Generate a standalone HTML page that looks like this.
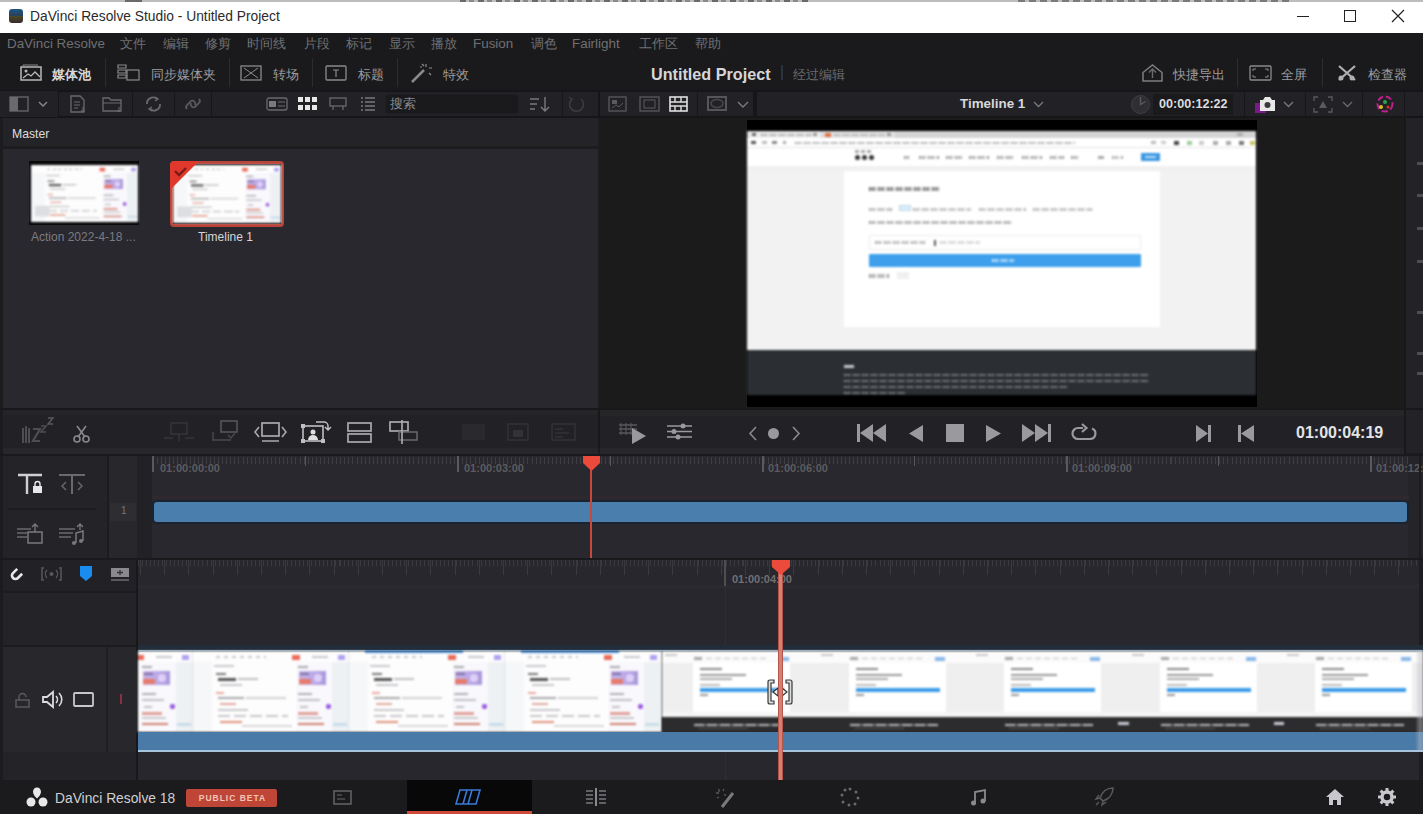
<!DOCTYPE html>
<html><head><meta charset="utf-8">
<style>
*{margin:0;padding:0;box-sizing:border-box}
html,body{width:1423px;height:814px;overflow:hidden;background:#1c1c1f;font-family:"Liberation Sans",sans-serif}
.a{position:absolute}
.t{position:absolute;white-space:nowrap;line-height:1}
svg{position:absolute;overflow:visible}
.m{color:#707072;font-size:13.4px;top:37px}
.tb{color:#9c9c9e;font-size:13px;top:68px}
.thumb{background:#fff;overflow:hidden;filter:blur(1px)}
.thumb i,#clip1 i,#clip2 i{position:absolute;display:block}
.ru{font-size:11px;font-weight:bold;color:#5c5c60}
.sep{position:absolute;width:1px;background:#2c2c2f}
</style></head><body>
<!-- top strip -->
<div class="a" style="left:0;top:0;width:1423px;height:2px;background:#bdbdbd"></div><div class="a" style="left:125px;top:0;width:17px;height:2px;background:#6a6a6a"></div><div class="a" style="left:460px;top:0;width:348px;height:2px;background:repeating-linear-gradient(90deg,#6a6a6a 0 6px,#bdbdbd 6px 9px,#8a8a8a 9px 14px,#bdbdbd 14px 18px)"></div><div class="a" style="left:1018px;top:0;width:272px;height:2px;background:repeating-linear-gradient(90deg,#7a7a7a 0 7px,#bdbdbd 7px 11px)"></div>
<!-- title bar -->
<div class="a" style="left:0;top:2px;width:1423px;height:31px;background:#fff"></div>
<div class="a" style="left:9px;top:9px;width:14px;height:14px;border-radius:3px;background:linear-gradient(#1d5a86 0%,#2c3e58 50%,#4a4a2a 51%,#3b2a2a 100%)"></div>
<div class="t" style="left:30px;top:10px;font-size:13.8px;color:#2b2b2b">DaVinci Resolve Studio - Untitled Project</div>
<svg style="left:1297px;top:16px" width="12" height="2"><rect width="12" height="1" fill="#222"/></svg>
<svg style="left:1344px;top:10px" width="12" height="12"><rect x="0.5" y="0.5" width="11" height="11" fill="none" stroke="#222" stroke-width="1"/></svg>
<svg style="left:1392px;top:10px" width="12" height="12"><path d="M0 0L12 12M12 0L0 12" stroke="#222" stroke-width="1.2"/></svg>

<!-- menu bar -->
<div class="a" style="left:0;top:33px;width:1423px;height:57px;background:#1a1a1c"></div>
<div class="t m" style="left:7px">DaVinci Resolve</div>
<div class="t m" style="left:120px">文件</div>
<div class="t m" style="left:163px">编辑</div>
<div class="t m" style="left:205px">修剪</div>
<div class="t m" style="left:247px">时间线</div>
<div class="t m" style="left:304px">片段</div>
<div class="t m" style="left:346px">标记</div>
<div class="t m" style="left:389px">显示</div>
<div class="t m" style="left:431px">播放</div>
<div class="t m" style="left:473px">Fusion</div>
<div class="t m" style="left:531px">调色</div>
<div class="t m" style="left:572px">Fairlight</div>
<div class="t m" style="left:639px">工作区</div>
<div class="t m" style="left:695px">帮助</div>

<!-- toolbar -->
<svg style="left:20px;top:64px" width="22" height="17"><rect x="1" y="3" width="20" height="13" fill="none" stroke="#b8b8b8" stroke-width="1.5"/><path d="M3 3V1h15" stroke="#888" fill="none"/><circle cx="6" cy="7" r="1.5" fill="#b8b8b8"/><path d="M3 14l5-4 3 2 4-4 5 5" stroke="#b8b8b8" fill="none" stroke-width="1.3"/></svg>
<div class="t tb" style="left:52px;color:#d8d8d8;font-weight:bold">媒体池</div>
<div class="sep" style="left:105px;top:58px;height:29px"></div>
<svg style="left:117px;top:64px" width="23" height="17"><path d="M1 1h8v3H1zM1 6h8v3H1zM1 11h8v3H1z" fill="none" stroke="#8a8a8a" stroke-width="1.2"/><rect x="10" y="6" width="12" height="10" fill="none" stroke="#8a8a8a" stroke-width="1.2"/></svg>
<div class="t tb" style="left:151px">同步媒体夹</div>
<div class="sep" style="left:229px;top:58px;height:29px"></div>
<svg style="left:240px;top:65px" width="22" height="16"><rect x="1" y="1" width="20" height="14" fill="none" stroke="#8a8a8a" stroke-width="1.3"/><path d="M4 3l7 5 7-5M4 13l7-5 7 5" fill="none" stroke="#8a8a8a"/></svg>
<div class="t tb" style="left:273px">转场</div>
<div class="sep" style="left:312px;top:58px;height:29px"></div>
<svg style="left:325px;top:65px" width="22" height="16"><rect x="1" y="1" width="20" height="14" rx="1" fill="none" stroke="#8a8a8a" stroke-width="1.3"/><path d="M8 5h6M11 5v7" stroke="#8a8a8a" stroke-width="1.2"/></svg>
<div class="t tb" style="left:358px">标题</div>
<div class="sep" style="left:397px;top:58px;height:29px"></div>
<svg style="left:410px;top:63px" width="22" height="20"><path d="M2 19L14 7" stroke="#8a8a8a" stroke-width="2.5"/><path d="M16 1v3M19 5h3M14 3l-2-2M19 10l2 2M10 4h2" stroke="#8a8a8a" stroke-width="1.2"/></svg>
<div class="t tb" style="left:443px">特效</div>

<div class="t" style="left:651px;top:66px;font-size:16.2px;font-weight:bold;color:#d6d6d8">Untitled Project</div>
<div class="sep" style="left:781px;top:65px;height:15px;background:#2a3440;width:2px"></div>
<div class="t" style="left:793px;top:68px;font-size:13px;color:#6a6a6c">经过编辑</div>

<svg style="left:1142px;top:64px" width="21" height="18"><path d="M1 17V8.5L10.5 1 20 8.5V17z" fill="none" stroke="#7e7e80" stroke-width="1.5"/><path d="M10.5 5v9M7 8.5l3.5-3.5 3.5 3.5" fill="none" stroke="#6a6a6c" stroke-width="1.4"/></svg>
<div class="t tb" style="left:1173px">快捷导出</div>
<div class="sep" style="left:1237px;top:58px;height:29px"></div>
<svg style="left:1249px;top:65px" width="23" height="16"><rect x="1" y="1" width="21" height="14" rx="1" fill="none" stroke="#8a8a8a" stroke-width="1.3"/><path d="M4 6V4h3M16 4h3v2M4 10v2h3M16 12h3v-2" fill="none" stroke="#8a8a8a"/></svg>
<div class="t tb" style="left:1281px">全屏</div>
<div class="sep" style="left:1322px;top:58px;height:29px"></div>
<svg style="left:1337px;top:64px" width="20" height="18"><path d="M2 2l16 14M18 2L2 16" stroke="#b0b0b0" stroke-width="2.2"/><circle cx="4" cy="14" r="2.5" fill="#b0b0b0"/><circle cx="15" cy="14" r="2.5" fill="#b0b0b0"/></svg>
<div class="t tb" style="left:1368px">检查器</div>

<!-- media pool toolbar -->
<div class="a" style="left:0;top:90px;width:1423px;height:28px;background:#161618"></div>
<div class="a" style="left:0;top:91px;width:58px;height:26px;background:#222226"></div>
<div class="a" style="left:59px;top:92px;width:73px;height:24px;background:#222226"></div>
<div class="a" style="left:133px;top:92px;width:41px;height:24px;background:#222226"></div>
<div class="a" style="left:175px;top:92px;width:36px;height:24px;background:#222226"></div>
<div class="a" style="left:212px;top:92px;width:386px;height:24px;background:#222226"></div>

<!-- viewer toolbar -->
<div class="a" style="left:600px;top:92px;width:97px;height:24px;background:#222226"></div>
<div class="a" style="left:698px;top:92px;width:55px;height:24px;background:#222226"></div>
<div class="a" style="left:757px;top:92px;width:487px;height:24px;background:#222226"></div>
<div class="a" style="left:1245px;top:92px;width:60px;height:24px;background:#222226"></div>
<div class="a" style="left:1306px;top:92px;width:56px;height:24px;background:#222226"></div>
<div class="a" style="left:1363px;top:92px;width:41px;height:24px;background:#222226"></div>
<div class="a" style="left:1405px;top:92px;width:18px;height:24px;background:#222226"></div>

<!-- media pool toolbar icons -->
<svg style="left:9px;top:96px" width="20" height="16"><rect x="1" y="1" width="18" height="14" fill="none" stroke="#6a6a6e" stroke-width="1.3"/><rect x="1" y="1" width="8" height="14" fill="#6a6a6e"/></svg>
<svg style="left:38px;top:101px" width="10" height="6"><path d="M1 1l4 4 4-4" fill="none" stroke="#8a8a8e" stroke-width="1.4"/></svg>
<svg style="left:70px;top:95px" width="17" height="18"><path d="M1 1h9l4 4v12H1z" fill="none" stroke="#6a6a6e" stroke-width="1.3"/><path d="M4 7h6M4 10h6M4 13h4" stroke="#6a6a6e"/><path d="M13 12v5M11 15l2 2 2-2" stroke="#6a6a6e" fill="none"/></svg>
<svg style="left:102px;top:95px" width="20" height="18"><path d="M1 3h6l2 2h10v11H1z" fill="none" stroke="#6a6a6e" stroke-width="1.3"/><path d="M1 8h18" stroke="#6a6a6e"/><path d="M17 12v5M15 15l2 2 2-2" stroke="#6a6a6e" fill="none"/></svg>
<svg style="left:144px;top:96px" width="19" height="16"><path d="M3 8a6 6 0 0 1 10-5M16 8a6 6 0 0 1-10 5" fill="none" stroke="#6a6a6e" stroke-width="1.8"/><path d="M11 1l3 2-3 2M8 11l-3 2 3 2" fill="none" stroke="#6a6a6e" stroke-width="1.5"/></svg>
<svg style="left:184px;top:96px" width="18" height="16"><path d="M3 13a3 3 0 0 1 0-4l4-4a3 3 0 0 1 4 4M15 3a3 3 0 0 1 0 4l-4 4a3 3 0 0 1-4-4" fill="none" stroke="#5a5a5e" stroke-width="1.8"/></svg>
<svg style="left:266px;top:97px" width="22" height="14"><rect x="1" y="1" width="20" height="12" rx="2" fill="none" stroke="#6a6a6e" stroke-width="1.3"/><rect x="3" y="4" width="7" height="6" fill="#7a7a7e"/><path d="M12 5h7M12 9h7" stroke="#6a6a6e"/></svg>
<svg style="left:298px;top:97px" width="19" height="14"><g fill="#e8e8e8"><rect x="0" y="0" width="5" height="5"/><rect x="7" y="0" width="5" height="5"/><rect x="14" y="0" width="5" height="5"/><rect x="0" y="8" width="5" height="5"/><rect x="7" y="8" width="5" height="5"/><rect x="14" y="8" width="5" height="5"/></g></svg>
<svg style="left:329px;top:97px" width="18" height="14"><rect x="1" y="1" width="16" height="8" fill="none" stroke="#6a6a6e" stroke-width="1.3"/><path d="M4 9v4M14 9v4" stroke="#6a6a6e" stroke-width="1.3"/></svg>
<svg style="left:361px;top:97px" width="14" height="14"><path d="M0 1h2M0 5h2M0 9h2M0 13h2M4 1h10M4 5h10M4 9h10M4 13h10" stroke="#7a7a7e" stroke-width="1.4"/></svg>
<div class="a" style="left:385px;top:94px;width:134px;height:20px;background:#1a1a1d;border:1px solid #202024"></div>
<div class="t" style="left:390px;top:97px;font-size:13px;color:#8a8a8e">搜索</div>
<svg style="left:529px;top:96px" width="21" height="16"><path d="M1 3h9M1 8h7M1 13h5" stroke="#7a7a7e" stroke-width="1.4"/><path d="M16 1v14M12 11l4 4 4-4" fill="none" stroke="#7a7a7e" stroke-width="1.4"/></svg>
<div class="a" style="left:562px;top:92px;width:1px;height:24px;background:#18181b"></div>
<svg style="left:567px;top:96px" width="19" height="17"><path d="M5 3a7 7 0 1 0 9 0" fill="none" stroke="#3c3c40" stroke-width="1.6"/><path d="M2 1l3 2-2 3" fill="none" stroke="#3c3c40" stroke-width="1.4"/></svg>

<!-- viewer toolbar icons -->
<svg style="left:608px;top:96px" width="19" height="16"><rect x="1" y="1" width="17" height="14" fill="none" stroke="#5a5a5e" stroke-width="1.3"/><rect x="4" y="4" width="5" height="4" fill="#5a5a5e"/><path d="M4 12l4-3 3 2 4-4" stroke="#5a5a5e" fill="none"/></svg>
<svg style="left:639px;top:96px" width="21" height="16"><rect x="1" y="1" width="19" height="14" fill="none" stroke="#5a5a5e" stroke-width="1.3"/><rect x="5" y="4" width="11" height="8" fill="none" stroke="#5a5a5e"/></svg>
<svg style="left:669px;top:96px" width="19" height="16"><rect x="1" y="1" width="17" height="14" fill="none" stroke="#e0e0e0" stroke-width="1.6"/><path d="M1 6h17M1 10h17M6 1v5M12 1v5M6 10v5M12 10v5" stroke="#e0e0e0" stroke-width="1.4"/></svg>
<svg style="left:707px;top:96px" width="20" height="15"><rect x="1" y="1" width="18" height="13" fill="none" stroke="#55555a" stroke-width="2"/><ellipse cx="10" cy="7.5" rx="6" ry="4" fill="none" stroke="#47474c" stroke-width="1.6"/></svg>
<svg style="left:737px;top:101px" width="12" height="7"><path d="M1 1l5 5 5-5" fill="none" stroke="#7a7a7e" stroke-width="1.4"/></svg>
<div class="t" style="left:960px;top:97px;font-size:13.4px;font-weight:bold;color:#d8d8da">Timeline 1</div>
<svg style="left:1033px;top:101px" width="11" height="7"><path d="M1 1l4.5 4.5L10 1" fill="none" stroke="#7a7a7e" stroke-width="1.3"/></svg>
<svg style="left:1130px;top:94px" width="21" height="21"><circle cx="10.5" cy="10.5" r="9" fill="#2e2e33" stroke="#3e3e44" stroke-width="1"/><path d="M10.5 3v7.5l5-3" stroke="#5a5a5e" fill="none" stroke-width="1.4"/></svg>
<div class="a" style="left:1153px;top:94px;width:80px;height:21px;background:#1a1a1d"></div>
<div class="t" style="left:1159px;top:98px;font-size:12.6px;font-weight:bold;color:#dcdcde">00:00:12:22</div>
<svg style="left:1255px;top:95px" width="22" height="18"><rect x="0" y="8" width="11" height="10" fill="#7a1a8a"/><path d="M5 5h3l2-3h5l2 3h3v11H5z" fill="#e8e8e8"/><circle cx="12.5" cy="10" r="3" fill="#3a3a3e"/></svg>
<svg style="left:1283px;top:101px" width="11" height="7"><path d="M1 1l4.5 4.5L10 1" fill="none" stroke="#7a7a7e" stroke-width="1.3"/></svg>
<svg style="left:1313px;top:96px" width="20" height="17"><path d="M1 5V1h4M15 1h4v4M1 12v4h4M15 16h4v-4" fill="none" stroke="#5a5a5e" stroke-width="1.3"/><path d="M6 12l4-7 4 7z" fill="#5a5a5e"/></svg>
<svg style="left:1342px;top:101px" width="11" height="7"><path d="M1 1l4.5 4.5L10 1" fill="none" stroke="#6a6a6e" stroke-width="1.3"/></svg>
<svg style="left:1375px;top:95px" width="19" height="18"><circle cx="10" cy="9" r="7.5" fill="none" stroke="#c02090" stroke-width="2" stroke-dasharray="6 3"/><circle cx="6" cy="12" r="2" fill="#d8c020"/><circle cx="10" cy="7" r="2" fill="#30a050"/><circle cx="13" cy="12" r="1.5" fill="#e03030"/></svg>

<!-- master header -->
<div class="a" style="left:0;top:118px;width:598px;height:30px;background:#242428"></div>
<!-- media pool content -->
<div class="a" style="left:0;top:148px;width:598px;height:260px;background:#29282e"></div>
<div class="a" style="left:0;top:118px;width:3px;height:290px;background:#1c1c1f"></div>
<div class="t" style="left:12px;top:128px;font-size:12.2px;color:#dcdcde">Master</div>
<div class="a" style="left:0;top:146px;width:598px;height:3px;background:#1d1d20"></div>
<!-- thumb 1 -->
<div class="a" style="left:29px;top:161px;width:110px;height:64px;background:#0a0a0a"></div>
<div class="a thumb" style="left:31px;top:165px;width:107px;height:57px"><!--T1--><div class="a" style="left:0;top:0;width:156px;height:81px;transform-origin:0 0;transform:scale(0.686,0.704)"><i style="left:0.0px;top:0px;width:156px;height:81px;background:#fdfdfd;"></i><i style="left:0.0px;top:11px;width:20px;height:70px;background:#f6f7f9;"></i><i style="left:0.0px;top:0px;width:1px;height:81px;background:#dde2e6;"></i><i style="left:24.0px;top:5px;width:50px;height:2px;background:repeating-linear-gradient(90deg,#c8c8cc 0 4px,transparent 4px 8px);"></i><i style="left:100.0px;top:4px;width:8px;height:5px;background:#ec6a58;"></i><i style="left:120.0px;top:5px;width:16px;height:2px;background:#c8c8cc;"></i><i style="left:146.0px;top:4px;width:7px;height:5px;background:#b0a0f0;"></i><i style="left:22.0px;top:14px;width:20px;height:2px;background:#c8c8cc;"></i><i style="left:24.0px;top:22px;width:10px;height:2px;background:#777;"></i><i style="left:26.0px;top:27px;width:18px;height:3px;background:#555;"></i><i style="left:46.0px;top:27px;width:20px;height:2px;background:#c0c0c4;"></i><i style="left:28.0px;top:33px;width:22px;height:2px;background:#c8c8cc;"></i><i style="left:24.0px;top:41px;width:8px;height:2px;background:#e8a8a0;"></i><i style="left:26.0px;top:46px;width:26px;height:2px;background:#a8a8ac;"></i><i style="left:54.0px;top:46px;width:40px;height:2px;background:#d0d0d4;"></i><i style="left:28.0px;top:52px;width:16px;height:2px;background:#e0a8a0;"></i><i style="left:26.0px;top:58px;width:30px;height:2px;background:#c8c8cc;"></i><i style="left:26.0px;top:64px;width:70px;height:2px;background:repeating-linear-gradient(90deg,#c8c8cc 0 12px,transparent 12px 16px);"></i><i style="left:28.0px;top:70px;width:22px;height:2px;background:#e0907a;"></i><i style="left:50.0px;top:74px;width:50px;height:2px;background:#d8d8dc;"></i><i style="left:104.0px;top:11px;width:36px;height:70px;background:#f9f8fc;"></i><i style="left:106.0px;top:15px;width:10px;height:2px;background:#a8a8ac;"></i><i style="left:107.0px;top:20px;width:27px;height:14px;background:linear-gradient(90deg,#c8b0e0 0,#b8a8e8 60%,#a898d8 100%);"></i><i style="left:107.0px;top:28px;width:12px;height:5px;background:#e87a6a;"></i><i style="left:108.0px;top:22px;width:9px;height:2px;background:#7a70a8;"></i><i style="left:122.0px;top:23px;width:8px;height:8px;background:#e0d0f8;border-radius:4px"></i><i style="left:106.0px;top:42px;width:14px;height:2px;background:#b0b0b4;"></i><i style="left:106.0px;top:48px;width:22px;height:2px;background:#c0c0c4;"></i><i style="left:134.0px;top:53px;width:5px;height:5px;background:#9a5ae0;border-radius:2px"></i><i style="left:108.0px;top:55px;width:8px;height:2px;background:#c0c0c4;"></i><i style="left:106.0px;top:61px;width:20px;height:3px;background:#e0a098;"></i><i style="left:106.0px;top:66px;width:24px;height:2px;background:#c8c8cc;"></i><i style="left:106.0px;top:72px;width:26px;height:2px;background:#d08070;"></i><i style="left:140.0px;top:11px;width:16px;height:70px;background:#eef1f3;"></i><i style="left:141.0px;top:72px;width:14px;height:3px;background:#c8dcea;"></i><i style="left:6.0px;top:58px;width:21px;height:15px;background:#dcdee2;"></i></div><!--/T1--></div>
<div class="t" style="left:31px;top:231px;font-size:12px;color:#7c7c80">Action 2022-4-18 ...</div>
<!-- thumb 2 -->
<div class="a" style="left:170px;top:161px;width:114px;height:66px;background:#b8443a;border-radius:4px"></div><div class="a" style="left:173px;top:164px;width:108px;height:60px;background:#1a1010"></div>
<div class="a thumb" style="left:173px;top:165px;width:108px;height:58px"><!--T2--><div class="a" style="left:0;top:0;width:156px;height:81px;transform-origin:0 0;transform:scale(0.692,0.716)"><i style="left:0.0px;top:0px;width:156px;height:81px;background:#fdfdfd;"></i><i style="left:0.0px;top:11px;width:20px;height:70px;background:#f6f7f9;"></i><i style="left:0.0px;top:0px;width:1px;height:81px;background:#dde2e6;"></i><i style="left:24.0px;top:5px;width:50px;height:2px;background:repeating-linear-gradient(90deg,#c8c8cc 0 4px,transparent 4px 8px);"></i><i style="left:100.0px;top:4px;width:8px;height:5px;background:#ec6a58;"></i><i style="left:120.0px;top:5px;width:16px;height:2px;background:#c8c8cc;"></i><i style="left:146.0px;top:4px;width:7px;height:5px;background:#b0a0f0;"></i><i style="left:22.0px;top:14px;width:20px;height:2px;background:#c8c8cc;"></i><i style="left:24.0px;top:22px;width:10px;height:2px;background:#777;"></i><i style="left:26.0px;top:27px;width:18px;height:3px;background:#555;"></i><i style="left:46.0px;top:27px;width:20px;height:2px;background:#c0c0c4;"></i><i style="left:28.0px;top:33px;width:22px;height:2px;background:#c8c8cc;"></i><i style="left:24.0px;top:41px;width:8px;height:2px;background:#e8a8a0;"></i><i style="left:26.0px;top:46px;width:26px;height:2px;background:#a8a8ac;"></i><i style="left:54.0px;top:46px;width:40px;height:2px;background:#d0d0d4;"></i><i style="left:28.0px;top:52px;width:16px;height:2px;background:#e0a8a0;"></i><i style="left:26.0px;top:58px;width:30px;height:2px;background:#c8c8cc;"></i><i style="left:26.0px;top:64px;width:70px;height:2px;background:repeating-linear-gradient(90deg,#c8c8cc 0 12px,transparent 12px 16px);"></i><i style="left:28.0px;top:70px;width:22px;height:2px;background:#e0907a;"></i><i style="left:50.0px;top:74px;width:50px;height:2px;background:#d8d8dc;"></i><i style="left:104.0px;top:11px;width:36px;height:70px;background:#f9f8fc;"></i><i style="left:106.0px;top:15px;width:10px;height:2px;background:#a8a8ac;"></i><i style="left:107.0px;top:20px;width:27px;height:14px;background:linear-gradient(90deg,#c8b0e0 0,#b8a8e8 60%,#a898d8 100%);"></i><i style="left:107.0px;top:28px;width:12px;height:5px;background:#e87a6a;"></i><i style="left:108.0px;top:22px;width:9px;height:2px;background:#7a70a8;"></i><i style="left:122.0px;top:23px;width:8px;height:8px;background:#e0d0f8;border-radius:4px"></i><i style="left:106.0px;top:42px;width:14px;height:2px;background:#b0b0b4;"></i><i style="left:106.0px;top:48px;width:22px;height:2px;background:#c0c0c4;"></i><i style="left:134.0px;top:53px;width:5px;height:5px;background:#9a5ae0;border-radius:2px"></i><i style="left:108.0px;top:55px;width:8px;height:2px;background:#c0c0c4;"></i><i style="left:106.0px;top:61px;width:20px;height:3px;background:#e0a098;"></i><i style="left:106.0px;top:66px;width:24px;height:2px;background:#c8c8cc;"></i><i style="left:106.0px;top:72px;width:26px;height:2px;background:#d08070;"></i><i style="left:140.0px;top:11px;width:16px;height:70px;background:#eef1f3;"></i><i style="left:141.0px;top:72px;width:14px;height:3px;background:#c8dcea;"></i><i style="left:6.0px;top:58px;width:21px;height:15px;background:#dcdee2;"></i></div><!--/T2--></div>
<svg style="left:170px;top:161px" width="30" height="30"><path d="M3 0H29L0 29V3z" fill="#e0382c"/><path d="M5 10l4 4 7-7" fill="none" stroke="#7a1c16" stroke-width="2.4"/></svg>
<div class="t" style="left:198px;top:231px;font-size:12px;color:#d6d6d8">Timeline 1</div>

<!-- viewer bg -->
<div class="a" style="left:600px;top:118px;width:804px;height:291px;background:#1b1b1c"></div>
<div class="a" style="left:1406px;top:118px;width:17px;height:291px;background:#232327"></div>
<div class="a" style="left:1417px;top:162px;width:6px;height:3px;background:#4e4e52"></div><div class="a" style="left:1417px;top:194px;width:6px;height:3px;background:#4e4e52"></div><div class="a" style="left:1417px;top:227px;width:6px;height:3px;background:#4e4e52"></div><div class="a" style="left:1417px;top:260px;width:6px;height:3px;background:#4e4e52"></div><div class="a" style="left:1417px;top:311px;width:6px;height:3px;background:#4e4e52"></div><div class="a" style="left:1417px;top:352px;width:6px;height:3px;background:#4e4e52"></div><div class="a" style="left:1417px;top:372px;width:6px;height:3px;background:#4e4e52"></div>
<div class="a" style="left:1404px;top:118px;width:2px;height:291px;background:#18181b"></div>
<!-- viewer frame -->
<div class="a" style="left:747px;top:120px;width:510px;height:287px;background:#000"></div>
<!-- viewer screenshot -->
<div class="a" style="left:747px;top:131px;width:509px;height:264px;background:#f2f2f2;overflow:hidden;filter:blur(1px)">
<div class="a" style="left:0px;top:0px;width:509px;height:7px;background:#d4d4d4;"></div>
<div class="a" style="left:2px;top:1px;width:72px;height:6px;background:#eeeeee;"></div>
<div class="a" style="left:5px;top:2px;width:4px;height:3px;background:#666;"></div>
<div class="a" style="left:14px;top:3px;width:50px;height:2px;background:repeating-linear-gradient(90deg,#999 0 2px,transparent 2px 3px,#999 3px 5px,transparent 5px 6px,#999 6px 7px,transparent 7px 9px);"></div>
<div class="a" style="left:66px;top:2px;width:4px;height:3px;background:#999;"></div>
<div class="a" style="left:76px;top:1px;width:72px;height:6px;background:#e2e2e2;"></div>
<div class="a" style="left:78px;top:2px;width:6px;height:4px;background:#e07040;"></div>
<div class="a" style="left:87px;top:3px;width:50px;height:2px;background:repeating-linear-gradient(90deg,#aaa 0 2px,transparent 2px 3px,#aaa 3px 5px,transparent 5px 6px,#aaa 6px 7px,transparent 7px 9px);"></div>
<div class="a" style="left:140px;top:2px;width:4px;height:3px;background:#999;"></div>
<div class="a" style="left:490px;top:2px;width:6px;height:3px;background:#aaa;"></div>
<div class="a" style="left:0px;top:7px;width:509px;height:10px;background:#fff;"></div>
<div class="a" style="left:0px;top:16px;width:509px;height:1px;background:#e4e4e4;"></div>
<div class="a" style="left:4px;top:10px;width:5px;height:3px;background:#555;"></div>
<div class="a" style="left:15px;top:10px;width:5px;height:3px;background:#bbb;"></div>
<div class="a" style="left:25px;top:10px;width:5px;height:3px;background:#888;"></div>
<div class="a" style="left:36px;top:10px;width:3px;height:3px;background:#aaa;"></div>
<div class="a" style="left:48px;top:11px;width:280px;height:2px;background:repeating-linear-gradient(90deg,#9a9a9a 0 2px,transparent 2px 3px,#9a9a9a 3px 5px,transparent 5px 6px,#9a9a9a 6px 7px,transparent 7px 9px);"></div>
<div class="a" style="left:404px;top:10px;width:5px;height:3px;background:#bbb;"></div>
<div class="a" style="left:414px;top:10px;width:5px;height:3px;background:#ccc;"></div>
<div class="a" style="left:427px;top:10px;width:5px;height:4px;background:#444;"></div>
<div class="a" style="left:440px;top:10px;width:5px;height:4px;background:#9ccc9c;"></div>
<div class="a" style="left:452px;top:10px;width:5px;height:4px;background:#ccc;"></div>
<div class="a" style="left:466px;top:10px;width:5px;height:4px;background:#aaa;"></div>
<div class="a" style="left:479px;top:10px;width:5px;height:4px;background:#aaa;"></div>
<div class="a" style="left:492px;top:10px;width:5px;height:4px;background:#777;"></div>
<div class="a" style="left:503px;top:10px;width:5px;height:4px;background:#c8c060;"></div>
<div class="a" style="left:0px;top:17px;width:509px;height:18px;background:#fff;"></div>
<div class="a" style="left:108px;top:19px;width:4px;height:3px;background:#aaa;"></div>
<div class="a" style="left:114px;top:19px;width:4px;height:3px;background:#aaa;"></div>
<div class="a" style="left:120px;top:19px;width:4px;height:3px;background:#aaa;"></div>
<div class="a" style="left:108px;top:24px;width:5px;height:5px;background:#333;border-radius:50%"></div>
<div class="a" style="left:115px;top:24px;width:5px;height:5px;background:#333;border-radius:50%"></div>
<div class="a" style="left:122px;top:24px;width:5px;height:5px;background:#333;border-radius:50%"></div>
<div class="a" style="left:157px;top:25px;width:6px;height:3px;background:repeating-linear-gradient(90deg,#999 0 2px,transparent 2px 3px,#999 3px 5px,transparent 5px 6px,#999 6px 7px,transparent 7px 9px);"></div>
<div class="a" style="left:172px;top:25px;width:20px;height:3px;background:repeating-linear-gradient(90deg,#999 0 2px,transparent 2px 3px,#999 3px 5px,transparent 5px 6px,#999 6px 7px,transparent 7px 9px);"></div>
<div class="a" style="left:199px;top:25px;width:16px;height:3px;background:repeating-linear-gradient(90deg,#999 0 2px,transparent 2px 3px,#999 3px 5px,transparent 5px 6px,#999 6px 7px,transparent 7px 9px);"></div>
<div class="a" style="left:222px;top:25px;width:20px;height:3px;background:repeating-linear-gradient(90deg,#999 0 2px,transparent 2px 3px,#999 3px 5px,transparent 5px 6px,#999 6px 7px,transparent 7px 9px);"></div>
<div class="a" style="left:250px;top:25px;width:18px;height:3px;background:repeating-linear-gradient(90deg,#999 0 2px,transparent 2px 3px,#999 3px 5px,transparent 5px 6px,#999 6px 7px,transparent 7px 9px);"></div>
<div class="a" style="left:275px;top:25px;width:20px;height:3px;background:repeating-linear-gradient(90deg,#999 0 2px,transparent 2px 3px,#999 3px 5px,transparent 5px 6px,#999 6px 7px,transparent 7px 9px);"></div>
<div class="a" style="left:303px;top:25px;width:14px;height:3px;background:repeating-linear-gradient(90deg,#999 0 2px,transparent 2px 3px,#999 3px 5px,transparent 5px 6px,#999 6px 7px,transparent 7px 9px);"></div>
<div class="a" style="left:324px;top:25px;width:8px;height:3px;background:repeating-linear-gradient(90deg,#999 0 2px,transparent 2px 3px,#999 3px 5px,transparent 5px 6px,#999 6px 7px,transparent 7px 9px);"></div>
<div class="a" style="left:351px;top:25px;width:6px;height:3px;background:#aaa;"></div>
<div class="a" style="left:365px;top:25px;width:12px;height:3px;background:repeating-linear-gradient(90deg,#aaa 0 2px,transparent 2px 3px,#aaa 3px 5px,transparent 5px 6px,#aaa 6px 7px,transparent 7px 9px);"></div>
<div class="a" style="left:394px;top:22px;width:19px;height:8px;background:#3a96e0;"></div>
<div class="a" style="left:398px;top:25px;width:11px;height:2px;background:#bfe0fb;"></div>
<div class="a" style="left:0px;top:35px;width:509px;height:5px;background:#f0f0f0;"></div>
<div class="a" style="left:97px;top:40px;width:316px;height:156px;background:#fff;"></div>
<div class="a" style="left:122px;top:56px;width:70px;height:4px;background:repeating-linear-gradient(90deg,#6a6a6a 0 2px,transparent 2px 3px,#6a6a6a 3px 5px,transparent 5px 6px,#6a6a6a 6px 7px,transparent 7px 9px);"></div>
<div class="a" style="left:122px;top:77px;width:24px;height:3px;background:repeating-linear-gradient(90deg,#a8a8a8 0 2px,transparent 2px 3px,#a8a8a8 3px 5px,transparent 5px 6px,#a8a8a8 6px 7px,transparent 7px 9px);"></div>
<div class="a" style="left:152px;top:74px;width:12px;height:6px;background:#dbeef9;border:1px solid #bcd8ea"></div>
<div class="a" style="left:166px;top:77px;width:58px;height:3px;background:repeating-linear-gradient(90deg,#b0b0b0 0 2px,transparent 2px 3px,#b0b0b0 3px 5px,transparent 5px 6px,#b0b0b0 6px 7px,transparent 7px 9px);"></div>
<div class="a" style="left:232px;top:77px;width:48px;height:3px;background:repeating-linear-gradient(90deg,#b0b0b0 0 2px,transparent 2px 3px,#b0b0b0 3px 5px,transparent 5px 6px,#b0b0b0 6px 7px,transparent 7px 9px);"></div>
<div class="a" style="left:286px;top:77px;width:60px;height:3px;background:repeating-linear-gradient(90deg,#b0b0b0 0 2px,transparent 2px 3px,#b0b0b0 3px 5px,transparent 5px 6px,#b0b0b0 6px 7px,transparent 7px 9px);"></div>
<div class="a" style="left:122px;top:90px;width:144px;height:3px;background:repeating-linear-gradient(90deg,#9a9a9a 0 2px,transparent 2px 3px,#9a9a9a 3px 5px,transparent 5px 6px,#9a9a9a 6px 7px,transparent 7px 9px);"></div>
<div class="a" style="left:122px;top:104px;width:272px;height:15px;background:#fff;border:1px solid #ececec"></div>
<div class="a" style="left:128px;top:110px;width:50px;height:3px;background:repeating-linear-gradient(90deg,#aaa 0 2px,transparent 2px 3px,#aaa 3px 5px,transparent 5px 6px,#aaa 6px 7px,transparent 7px 9px);"></div>
<div class="a" style="left:187px;top:109px;width:2px;height:6px;background:#555;"></div>
<div class="a" style="left:193px;top:110px;width:40px;height:3px;background:repeating-linear-gradient(90deg,#ccc 0 2px,transparent 2px 3px,#ccc 3px 5px,transparent 5px 6px,#ccc 6px 7px,transparent 7px 9px);"></div>
<div class="a" style="left:122px;top:123px;width:272px;height:13px;background:#3ea0ec;border-radius:1px"></div>
<div class="a" style="left:245px;top:128px;width:22px;height:3px;background:repeating-linear-gradient(90deg,#d5ebfc 0 2px,transparent 2px 3px,#d5ebfc 3px 5px,transparent 5px 6px,#d5ebfc 6px 7px,transparent 7px 9px);"></div>
<div class="a" style="left:122px;top:143px;width:20px;height:4px;background:repeating-linear-gradient(90deg,#999 0 2px,transparent 2px 3px,#999 3px 5px,transparent 5px 6px,#999 6px 7px,transparent 7px 9px);"></div>
<div class="a" style="left:150px;top:141px;width:12px;height:7px;background:#f0f0f0;"></div>
<div class="a" style="left:0px;top:219px;width:509px;height:45px;background:#2b2f33;"></div>
<div class="a" style="left:97px;top:234px;width:10px;height:3px;background:#c8c8c8;"></div>
<div class="a" style="left:97px;top:243px;width:306px;height:2px;background:repeating-linear-gradient(90deg,#8e9092 0 2px,transparent 2px 3px,#8e9092 3px 5px,transparent 5px 6px,#8e9092 6px 7px,transparent 7px 9px);"></div>
<div class="a" style="left:97px;top:249px;width:306px;height:2px;background:repeating-linear-gradient(90deg,#8e9092 0 2px,transparent 2px 3px,#8e9092 3px 5px,transparent 5px 6px,#8e9092 6px 7px,transparent 7px 9px);"></div>
<div class="a" style="left:97px;top:255px;width:224px;height:2px;background:repeating-linear-gradient(90deg,#8e9092 0 2px,transparent 2px 3px,#8e9092 3px 5px,transparent 5px 6px,#8e9092 6px 7px,transparent 7px 9px);"></div>
<div class="a" style="left:97px;top:261px;width:62px;height:2px;background:repeating-linear-gradient(90deg,#8e9092 0 2px,transparent 2px 3px,#8e9092 3px 5px,transparent 5px 6px,#8e9092 6px 7px,transparent 7px 9px);"></div>
</div>

<!-- tool row -->
<div class="a" style="left:0;top:408px;width:1423px;height:2px;background:#18181b"></div>
<div class="a" style="left:0;top:410px;width:598px;height:43px;background:#222226"></div>
<div class="a" style="left:598px;top:408px;width:2px;height:45px;background:#18181b"></div>
<div class="a" style="left:600px;top:410px;width:804px;height:43px;background:#222226"></div>
<div class="a" style="left:1404px;top:408px;width:2px;height:45px;background:#18181b"></div>
<div class="a" style="left:1406px;top:410px;width:17px;height:43px;background:#232327"></div>
<div class="a" style="left:3px;top:410px;width:595px;height:5px;background:#252529"></div>
<div class="a" style="left:600px;top:410px;width:804px;height:6px;background:#262629"></div>
<div class="a" style="left:3px;top:448px;width:1401px;height:6px;background:#27272b"></div>
<div class="a" style="left:598px;top:448px;width:2px;height:6px;background:#1c1c1f"></div>
<div class="a" style="left:0;top:410px;width:3px;height:43px;background:#1c1c1f"></div>
<!-- left tool icons -->
<svg style="left:21px;top:417px" width="34" height="28"><path d="M2 11v15M5 9v17M8 11v15" stroke="#4e4e52" stroke-width="2"/><path d="M12 12h7l-7 12h7" fill="none" stroke="#4e4e52" stroke-width="2.2"/><path d="M20 9h5l-5 6h5" fill="none" stroke="#4e4e52" stroke-width="1.6"/><path d="M27 1h5l-5 6h5" fill="none" stroke="#5a5a5e" stroke-width="1.4"/></svg>
<svg style="left:72px;top:425px" width="19" height="18"><path d="M5 1l8 11M14 1L6 12" stroke="#8a8a8e" stroke-width="1.6"/><circle cx="5" cy="14" r="3" fill="none" stroke="#8a8a8e" stroke-width="1.6"/><circle cx="14" cy="14" r="3" fill="none" stroke="#8a8a8e" stroke-width="1.6"/></svg>
<svg style="left:163px;top:422px" width="33" height="20"><rect x="8" y="1" width="16" height="11" fill="none" stroke="#36363a" stroke-width="1.5"/><path d="M1 16h9M22 16h9M16 12v7" stroke="#36363a" stroke-width="1.5"/></svg>
<svg style="left:212px;top:420px" width="27" height="22"><rect x="9" y="1" width="16" height="11" fill="none" stroke="#5a5a5e" stroke-width="1.5"/><path d="M1 12v8h18M16 15l3 3 4-5" fill="none" stroke="#4a4a4e" stroke-width="1.4"/></svg>
<svg style="left:254px;top:421px" width="33" height="22"><rect x="8" y="2" width="17" height="13" fill="none" stroke="#aaaaae" stroke-width="1.7"/><path d="M5 6l-4 5 4 5M28 6l4 5-4 5M8 20h17" fill="none" stroke="#aaaaae" stroke-width="1.6"/></svg>
<svg style="left:300px;top:417px" width="30" height="28"><rect x="3" y="9" width="20" height="15" fill="none" stroke="#c0c0c4" stroke-width="1.6"/><path d="M16 5h8a4 4 0 0 1 4 4v3M25 10l3 3 3-3" fill="none" stroke="#c0c0c4" stroke-width="1.5"/><circle cx="13" cy="15" r="2.5" fill="#e0e0e0"/><path d="M8 23a5 5 0 0 1 10 0z" fill="#e0e0e0"/><rect x="1" y="7" width="4" height="4" fill="#c0c0c4"/><rect x="21" y="22" width="4" height="4" fill="#c0c0c4"/><rect x="1" y="22" width="4" height="4" fill="#c0c0c4"/></svg>
<svg style="left:347px;top:421px" width="25" height="22"><rect x="1" y="2" width="23" height="8" fill="none" stroke="#aaaaae" stroke-width="1.7"/><rect x="1" y="13" width="23" height="8" fill="none" stroke="#aaaaae" stroke-width="1.7"/></svg>
<svg style="left:389px;top:420px" width="29" height="24"><rect x="1" y="2" width="18" height="9" fill="none" stroke="#aaaaae" stroke-width="1.7"/><rect x="10" y="12" width="18" height="8" fill="none" stroke="#6a6a6e" stroke-width="1.5"/><path d="M13 0v24" stroke="#aaaaae" stroke-width="1.7"/></svg>
<svg style="left:461px;top:423px" width="25" height="18"><rect x="1" y="1" width="23" height="16" fill="#2a2a2e"/></svg>
<svg style="left:507px;top:423px" width="22" height="18"><rect x="1" y="1" width="20" height="16" fill="none" stroke="#333337" stroke-width="1.5"/><rect x="6" y="7" width="10" height="7" fill="#333337"/></svg>
<svg style="left:551px;top:423px" width="25" height="18"><rect x="1" y="1" width="23" height="16" fill="none" stroke="#333337" stroke-width="1.5"/><path d="M4 6h8M4 10h14M4 14h8" stroke="#333337" stroke-width="1.5"/></svg>
<!-- viewer controls -->
<svg style="left:618px;top:422px" width="29" height="22"><path d="M1 3h18M1 7h18M1 11h14" stroke="#5a5a5e" stroke-width="1.6"/><path d="M3 1v12M8 1v12M13 1v12" stroke="#5a5a5e" stroke-width="1"/><path d="M14 6l14 8-14 8z" fill="#9a9a9e"/></svg>
<svg style="left:666px;top:423px" width="27" height="17"><path d="M1 3h25M1 8.5h25M1 14h25" stroke="#9a9a9e" stroke-width="1.5"/><circle cx="17" cy="3" r="2.5" fill="#9a9a9e"/><circle cx="8" cy="8.5" r="2.5" fill="#9a9a9e"/><circle cx="12" cy="14" r="2.5" fill="#9a9a9e"/></svg>
<svg style="left:749px;top:426px" width="52" height="15"><path d="M7 1L1 7.5 7 14" fill="none" stroke="#8a8a8e" stroke-width="1.6"/><circle cx="24.5" cy="7.5" r="5.5" fill="#9a9a9e"/><path d="M44 1l6 6.5L44 14" fill="none" stroke="#8a8a8e" stroke-width="1.6"/></svg>
<svg style="left:857px;top:424px" width="30" height="18"><rect x="0" y="0" width="3" height="18" fill="#9a9a9e"/><path d="M16 0L3 9l13 9zM29 0L16 9l13 9z" fill="#9a9a9e"/></svg>
<svg style="left:909px;top:425px" width="15" height="17"><path d="M14 0L0 8.5 14 17z" fill="#9a9a9e"/></svg>
<svg style="left:946px;top:424px" width="18" height="18"><rect width="18" height="18" fill="#9a9a9e"/></svg>
<svg style="left:986px;top:425px" width="15" height="17"><path d="M0 0l15 8.5L0 17z" fill="#9a9a9e"/></svg>
<svg style="left:1022px;top:424px" width="30" height="18"><path d="M0 0l13 9-13 9zM13 0l13 9-13 9z" fill="#9a9a9e"/><rect x="26" y="0" width="3" height="18" fill="#9a9a9e"/></svg>
<svg style="left:1070px;top:422px" width="29" height="20"><path d="M13 6H8a5.5 5.5 0 0 0 0 11h12a5.5 5.5 0 0 0 2-10.6" fill="none" stroke="#9a9a9e" stroke-width="2.2"/><path d="M12 2l4.5 4-4.5 4" fill="none" stroke="#9a9a9e" stroke-width="2.2"/></svg>
<svg style="left:1196px;top:425px" width="16" height="17"><path d="M0 0l12 8.5L0 17z" fill="#9a9a9e"/><rect x="12" y="0" width="3" height="17" fill="#9a9a9e"/></svg>
<svg style="left:1238px;top:425px" width="16" height="17"><rect x="0" y="0" width="3" height="17" fill="#9a9a9e"/><path d="M16 0L3 8.5 16 17z" fill="#9a9a9e"/></svg>
<div class="t" style="left:1296px;top:425px;font-size:16px;font-weight:bold;color:#e4e4e6">01:00:04:19</div>

<!-- upper timeline -->
<div class="a" style="left:0;top:454px;width:1423px;height:2px;background:#1a1a1d"></div>
<div class="a" style="left:0;top:456px;width:107px;height:102px;background:#242428"></div>
<div class="a" style="left:0;top:456px;width:3px;height:102px;background:#1c1c1f"></div>
<div class="a" style="left:107px;top:456px;width:2px;height:102px;background:#1c1c1f"></div>
<div class="a" style="left:109px;top:456px;width:28px;height:102px;background:#28272c"></div>
<div class="a" style="left:110px;top:503px;width:26px;height:18px;background:#2e2d32"></div>
<div class="t" style="left:121px;top:506px;font-size:10px;color:#77777b">1</div>
<div class="a" style="left:137px;top:456px;width:15px;height:102px;background:#222226"></div>
<div class="a" style="left:152px;top:456px;width:1256px;height:102px;background:#29282e"></div>
<div class="a" style="left:1408px;top:456px;width:15px;height:102px;background:#252529"></div>
<div class="a" style="left:8px;top:508px;width:88px;height:2px;background:#1c1c1f"></div>
<svg style="left:17px;top:473px" width="28" height="22"><path d="M1 2h24M10 2v19" stroke="#d0d0d4" stroke-width="2.4"/><rect x="16" y="13" width="9" height="7" fill="#e8e8e8"/><path d="M18 13v-2a2.5 2.5 0 0 1 5 0v2" fill="none" stroke="#e8e8e8" stroke-width="1.4"/></svg>
<svg style="left:58px;top:473px" width="29" height="22"><path d="M1 2h26M14 2v19" stroke="#6a6a6e" stroke-width="2"/><path d="M8 9l-4 4 4 4M20 9l4 4-4 4" fill="none" stroke="#6a6a6e" stroke-width="1.4"/></svg>
<svg style="left:16px;top:523px" width="29" height="22"><path d="M1 6h14M1 10h10M1 14h10" stroke="#6a6a6e" stroke-width="1.5"/><rect x="12" y="9" width="14" height="11" fill="none" stroke="#7a7a7e" stroke-width="1.5"/><path d="M19 1v8M16 4l3-3 3 3" fill="none" stroke="#7a7a7e" stroke-width="1.3"/></svg>
<svg style="left:58px;top:523px" width="29" height="22"><path d="M1 6h16M1 10h14M1 14h12" stroke="#6a6a6e" stroke-width="1.5"/><path d="M18 20V10l7-2v10" fill="none" stroke="#7a7a7e" stroke-width="1.5"/><circle cx="16" cy="20" r="2" fill="#7a7a7e"/><circle cx="23" cy="18" r="2" fill="#7a7a7e"/><path d="M22 1v6M19 4l3-3 3 3" fill="none" stroke="#7a7a7e" stroke-width="1.3"/></svg>
<!-- upper ruler -->
<div class="a" style="left:153px;top:457px;width:1255px;height:7px;background:repeating-linear-gradient(90deg,#3e3e43 0 1px,transparent 1px 4.07px)"></div>
<div class="a" style="left:152px;top:456px;width:2px;height:16px;background:#5a5a5e"></div>
<div class="a" style="left:457px;top:456px;width:2px;height:16px;background:#5a5a5e"></div>
<div class="a" style="left:762px;top:456px;width:2px;height:16px;background:#5a5a5e"></div>
<div class="a" style="left:1066px;top:456px;width:2px;height:16px;background:#5a5a5e"></div>
<div class="a" style="left:1370px;top:456px;width:2px;height:16px;background:#5a5a5e"></div>
<div class="a" style="left:305px;top:456px;width:1px;height:10px;background:#55555a"></div><div class="a" style="left:610px;top:456px;width:1px;height:10px;background:#55555a"></div><div class="a" style="left:914px;top:456px;width:1px;height:10px;background:#55555a"></div><div class="a" style="left:1218px;top:456px;width:1px;height:10px;background:#55555a"></div><div class="t ru" style="left:160px;top:463px">01:00:00:00</div>
<div class="t ru" style="left:464px;top:463px">01:00:03:00</div>
<div class="t ru" style="left:768px;top:463px">01:00:06:00</div>
<div class="t ru" style="left:1072px;top:463px">01:00:09:00</div>
<div class="t ru" style="left:1376px;top:463px">01:00:12:00</div>
<div class="a" style="left:152px;top:496px;width:1257px;height:3px;background:#30282f"></div><div class="a" style="left:152px;top:500px;width:1257px;height:24px;background:#1a2430;border-radius:4px"></div>
<div class="a" style="left:154px;top:502px;width:1253px;height:20px;background:#4a7ead;border-radius:3px"></div>
<div class="a" style="left:1419px;top:456px;width:2px;height:102px;background:#1c1c1f"></div>
<!-- upper playhead -->
<div class="a" style="left:590px;top:462px;width:2px;height:96px;background:#c8483c"></div>
<svg style="left:583px;top:456px" width="18" height="15"><path d="M0 0h17v7l-8.5 8L0 7z" fill="#ec4a3a"/></svg>

<!-- lower timeline -->
<div class="a" style="left:0;top:558px;width:1423px;height:2px;background:#1a1a1d"></div>
<div class="a" style="left:0;top:560px;width:137px;height:31px;background:#222226"></div>
<div class="a" style="left:0;top:591px;width:137px;height:2px;background:#1c1c1f"></div>
<div class="a" style="left:0;top:593px;width:137px;height:53px;background:#242428"></div>
<div class="a" style="left:0;top:645px;width:137px;height:2px;background:#1c1c1f"></div>
<div class="a" style="left:0;top:647px;width:106px;height:105px;background:#28272c"></div>
<div class="a" style="left:106px;top:647px;width:2px;height:105px;background:#1f1f23"></div>
<div class="a" style="left:108px;top:647px;width:29px;height:105px;background:#28272c"></div>
<div class="a" style="left:0;top:752px;width:137px;height:28px;background:#242428"></div>
<div class="a" style="left:0;top:560px;width:3px;height:220px;background:#1c1c1f"></div>
<div class="a" style="left:136px;top:560px;width:2px;height:220px;background:#18181b"></div>
<div class="a" style="left:138px;top:560px;width:1285px;height:220px;background:#28272d"></div>
<!-- lower toolbar icons -->
<svg style="left:8px;top:566px" width="17" height="17"><path d="M5 4v6a3.5 3.5 0 0 0 7 0V4" fill="none" stroke="#e8e8ea" stroke-width="2.6" transform="rotate(45 8.5 8.5)"/></svg>
<svg style="left:41px;top:567px" width="21" height="14"><path d="M3 1H1v12h2M18 1h2v12h-2" fill="none" stroke="#58585c" stroke-width="1.5"/><circle cx="10.5" cy="7" r="2" fill="#58585c"/><path d="M6 3a6 6 0 0 0 0 8M15 3a6 6 0 0 1 0 8" fill="none" stroke="#58585c" stroke-width="1.3"/></svg>
<svg style="left:80px;top:566px" width="12" height="16"><path d="M0 0h12v10l-6 5-6-5z" fill="#1a8cf0"/></svg>
<svg style="left:111px;top:568px" width="18" height="13"><rect x="0" y="0" width="18" height="9" fill="#8a8a8e"/><path d="M6 4.5h6M9 2v5" stroke="#333" stroke-width="1.3"/><rect x="0" y="11" width="18" height="2" fill="#5a5a5e"/></svg>
<svg style="left:15px;top:693px" width="15" height="15"><path d="M4 7V4a3.5 3.5 0 0 1 7 0" fill="none" stroke="#5a5a5e" stroke-width="1.5"/><rect x="1" y="7" width="13" height="7" fill="none" stroke="#5a5a5e" stroke-width="1.5"/></svg>
<svg style="left:42px;top:691px" width="20" height="17"><path d="M1 6h4l6-5v15l-6-5H1z" fill="none" stroke="#dcdcde" stroke-width="1.8"/><path d="M14 5a5 5 0 0 1 0 7M17 2a9 9 0 0 1 0 13" fill="none" stroke="#dcdcde" stroke-width="1.6"/></svg>
<svg style="left:73px;top:692px" width="21" height="15"><rect x="1" y="1" width="19" height="13" rx="1" fill="none" stroke="#c8c8cc" stroke-width="1.8"/></svg>
<div class="a" style="left:120px;top:694px;width:2px;height:10px;background:#8a3040"></div>
<!-- lower ruler -->
<div class="a" style="left:138px;top:560px;width:1285px;height:6px;background:repeating-linear-gradient(90deg,#3a3a3f 0 1px,transparent 1px 4.03px)"></div>
<div class="a" style="left:138px;top:560px;width:1285px;height:15px;background:repeating-linear-gradient(90deg,transparent 0 2px,#3a3a3f 2px 3px,transparent 3px 24.2px)"></div>
<div class="a" style="left:138px;top:585px;width:1285px;height:3px;background:#2b2a30"></div>
<div class="a" style="left:724px;top:560px;width:2px;height:26px;background:#4e4e52"></div>
<div class="a" style="left:725px;top:586px;width:1px;height:194px;background:#2e2e33"></div>
<div class="t" style="left:732px;top:574px;font-size:11px;font-weight:bold;color:#707074">01:00:04:00</div>

<!-- clips -->
<div class="a" style="left:138px;top:645px;width:1285px;height:6px;background:#232d39"></div>
<div class="a" style="left:138px;top:650px;width:1285px;height:1px;background:#6a8aa8"></div>
<div id="clip1" class="a" style="left:138px;top:651px;width:524px;height:81px;background:#fafafa;overflow:hidden;filter:blur(1px)"><!--C1--><i style="left:-102.0px;top:0px;width:156px;height:81px;background:#fdfdfd;"></i><i style="left:-102.0px;top:11px;width:20px;height:70px;background:#f6f7f9;"></i><i style="left:-102.0px;top:0px;width:1px;height:81px;background:#dde2e6;"></i><i style="left:-78.0px;top:5px;width:50px;height:2px;background:repeating-linear-gradient(90deg,#c8c8cc 0 4px,transparent 4px 8px);"></i><i style="left:-2.0px;top:4px;width:8px;height:5px;background:#ec6a58;"></i><i style="left:18.0px;top:5px;width:16px;height:2px;background:#c8c8cc;"></i><i style="left:44.0px;top:4px;width:7px;height:5px;background:#b0a0f0;"></i><i style="left:-80.0px;top:14px;width:20px;height:2px;background:#c8c8cc;"></i><i style="left:-78.0px;top:22px;width:10px;height:2px;background:#777;"></i><i style="left:-76.0px;top:27px;width:18px;height:3px;background:#555;"></i><i style="left:-56.0px;top:27px;width:20px;height:2px;background:#c0c0c4;"></i><i style="left:-74.0px;top:33px;width:22px;height:2px;background:#c8c8cc;"></i><i style="left:-78.0px;top:41px;width:8px;height:2px;background:#e8a8a0;"></i><i style="left:-76.0px;top:46px;width:26px;height:2px;background:#a8a8ac;"></i><i style="left:-48.0px;top:46px;width:40px;height:2px;background:#d0d0d4;"></i><i style="left:-74.0px;top:52px;width:16px;height:2px;background:#e0a8a0;"></i><i style="left:-76.0px;top:58px;width:30px;height:2px;background:#c8c8cc;"></i><i style="left:-76.0px;top:64px;width:70px;height:2px;background:repeating-linear-gradient(90deg,#c8c8cc 0 12px,transparent 12px 16px);"></i><i style="left:-74.0px;top:70px;width:22px;height:2px;background:#e0907a;"></i><i style="left:-52.0px;top:74px;width:50px;height:2px;background:#d8d8dc;"></i><i style="left:2.0px;top:11px;width:36px;height:70px;background:#f9f8fc;"></i><i style="left:4.0px;top:15px;width:10px;height:2px;background:#a8a8ac;"></i><i style="left:5.0px;top:20px;width:27px;height:14px;background:linear-gradient(90deg,#c8b0e0 0,#b8a8e8 60%,#a898d8 100%);"></i><i style="left:5.0px;top:28px;width:12px;height:5px;background:#e87a6a;"></i><i style="left:6.0px;top:22px;width:9px;height:2px;background:#7a70a8;"></i><i style="left:20.0px;top:23px;width:8px;height:8px;background:#e0d0f8;border-radius:4px"></i><i style="left:4.0px;top:42px;width:14px;height:2px;background:#b0b0b4;"></i><i style="left:4.0px;top:48px;width:22px;height:2px;background:#c0c0c4;"></i><i style="left:32.0px;top:53px;width:5px;height:5px;background:#9a5ae0;border-radius:2px"></i><i style="left:6.0px;top:55px;width:8px;height:2px;background:#c0c0c4;"></i><i style="left:4.0px;top:61px;width:20px;height:3px;background:#e0a098;"></i><i style="left:4.0px;top:66px;width:24px;height:2px;background:#c8c8cc;"></i><i style="left:4.0px;top:72px;width:26px;height:2px;background:#d08070;"></i><i style="left:38.0px;top:11px;width:16px;height:70px;background:#eef1f3;"></i><i style="left:39.0px;top:72px;width:14px;height:3px;background:#c8dcea;"></i><i style="left:54.0px;top:0px;width:156px;height:81px;background:#fdfdfd;"></i><i style="left:54.0px;top:11px;width:20px;height:70px;background:#f6f7f9;"></i><i style="left:54.0px;top:0px;width:1px;height:81px;background:#dde2e6;"></i><i style="left:78.0px;top:5px;width:50px;height:2px;background:repeating-linear-gradient(90deg,#c8c8cc 0 4px,transparent 4px 8px);"></i><i style="left:154.0px;top:4px;width:8px;height:5px;background:#ec6a58;"></i><i style="left:174.0px;top:5px;width:16px;height:2px;background:#c8c8cc;"></i><i style="left:200.0px;top:4px;width:7px;height:5px;background:#b0a0f0;"></i><i style="left:76.0px;top:14px;width:20px;height:2px;background:#c8c8cc;"></i><i style="left:78.0px;top:22px;width:10px;height:2px;background:#777;"></i><i style="left:80.0px;top:27px;width:18px;height:3px;background:#555;"></i><i style="left:100.0px;top:27px;width:20px;height:2px;background:#c0c0c4;"></i><i style="left:82.0px;top:33px;width:22px;height:2px;background:#c8c8cc;"></i><i style="left:78.0px;top:41px;width:8px;height:2px;background:#e8a8a0;"></i><i style="left:80.0px;top:46px;width:26px;height:2px;background:#a8a8ac;"></i><i style="left:108.0px;top:46px;width:40px;height:2px;background:#d0d0d4;"></i><i style="left:82.0px;top:52px;width:16px;height:2px;background:#e0a8a0;"></i><i style="left:80.0px;top:58px;width:30px;height:2px;background:#c8c8cc;"></i><i style="left:80.0px;top:64px;width:70px;height:2px;background:repeating-linear-gradient(90deg,#c8c8cc 0 12px,transparent 12px 16px);"></i><i style="left:82.0px;top:70px;width:22px;height:2px;background:#e0907a;"></i><i style="left:104.0px;top:74px;width:50px;height:2px;background:#d8d8dc;"></i><i style="left:158.0px;top:11px;width:36px;height:70px;background:#f9f8fc;"></i><i style="left:160.0px;top:15px;width:10px;height:2px;background:#a8a8ac;"></i><i style="left:161.0px;top:20px;width:27px;height:14px;background:linear-gradient(90deg,#c8b0e0 0,#b8a8e8 60%,#a898d8 100%);"></i><i style="left:161.0px;top:28px;width:12px;height:5px;background:#e87a6a;"></i><i style="left:162.0px;top:22px;width:9px;height:2px;background:#7a70a8;"></i><i style="left:176.0px;top:23px;width:8px;height:8px;background:#e0d0f8;border-radius:4px"></i><i style="left:160.0px;top:42px;width:14px;height:2px;background:#b0b0b4;"></i><i style="left:160.0px;top:48px;width:22px;height:2px;background:#c0c0c4;"></i><i style="left:188.0px;top:53px;width:5px;height:5px;background:#9a5ae0;border-radius:2px"></i><i style="left:162.0px;top:55px;width:8px;height:2px;background:#c0c0c4;"></i><i style="left:160.0px;top:61px;width:20px;height:3px;background:#e0a098;"></i><i style="left:160.0px;top:66px;width:24px;height:2px;background:#c8c8cc;"></i><i style="left:160.0px;top:72px;width:26px;height:2px;background:#d08070;"></i><i style="left:194.0px;top:11px;width:16px;height:70px;background:#eef1f3;"></i><i style="left:195.0px;top:72px;width:14px;height:3px;background:#c8dcea;"></i><i style="left:210.0px;top:0px;width:156px;height:81px;background:#fdfdfd;"></i><i style="left:210.0px;top:11px;width:20px;height:70px;background:#f6f7f9;"></i><i style="left:210.0px;top:0px;width:1px;height:81px;background:#dde2e6;"></i><i style="left:234.0px;top:5px;width:50px;height:2px;background:repeating-linear-gradient(90deg,#c8c8cc 0 4px,transparent 4px 8px);"></i><i style="left:310.0px;top:4px;width:8px;height:5px;background:#ec6a58;"></i><i style="left:330.0px;top:5px;width:16px;height:2px;background:#c8c8cc;"></i><i style="left:356.0px;top:4px;width:7px;height:5px;background:#b0a0f0;"></i><i style="left:232.0px;top:14px;width:20px;height:2px;background:#c8c8cc;"></i><i style="left:234.0px;top:22px;width:10px;height:2px;background:#777;"></i><i style="left:236.0px;top:27px;width:18px;height:3px;background:#555;"></i><i style="left:256.0px;top:27px;width:20px;height:2px;background:#c0c0c4;"></i><i style="left:238.0px;top:33px;width:22px;height:2px;background:#c8c8cc;"></i><i style="left:234.0px;top:41px;width:8px;height:2px;background:#e8a8a0;"></i><i style="left:236.0px;top:46px;width:26px;height:2px;background:#a8a8ac;"></i><i style="left:264.0px;top:46px;width:40px;height:2px;background:#d0d0d4;"></i><i style="left:238.0px;top:52px;width:16px;height:2px;background:#e0a8a0;"></i><i style="left:236.0px;top:58px;width:30px;height:2px;background:#c8c8cc;"></i><i style="left:236.0px;top:64px;width:70px;height:2px;background:repeating-linear-gradient(90deg,#c8c8cc 0 12px,transparent 12px 16px);"></i><i style="left:238.0px;top:70px;width:22px;height:2px;background:#e0907a;"></i><i style="left:260.0px;top:74px;width:50px;height:2px;background:#d8d8dc;"></i><i style="left:314.0px;top:11px;width:36px;height:70px;background:#f9f8fc;"></i><i style="left:316.0px;top:15px;width:10px;height:2px;background:#a8a8ac;"></i><i style="left:317.0px;top:20px;width:27px;height:14px;background:linear-gradient(90deg,#c8b0e0 0,#b8a8e8 60%,#a898d8 100%);"></i><i style="left:317.0px;top:28px;width:12px;height:5px;background:#e87a6a;"></i><i style="left:318.0px;top:22px;width:9px;height:2px;background:#7a70a8;"></i><i style="left:332.0px;top:23px;width:8px;height:8px;background:#e0d0f8;border-radius:4px"></i><i style="left:316.0px;top:42px;width:14px;height:2px;background:#b0b0b4;"></i><i style="left:316.0px;top:48px;width:22px;height:2px;background:#c0c0c4;"></i><i style="left:344.0px;top:53px;width:5px;height:5px;background:#9a5ae0;border-radius:2px"></i><i style="left:318.0px;top:55px;width:8px;height:2px;background:#c0c0c4;"></i><i style="left:316.0px;top:61px;width:20px;height:3px;background:#e0a098;"></i><i style="left:316.0px;top:66px;width:24px;height:2px;background:#c8c8cc;"></i><i style="left:316.0px;top:72px;width:26px;height:2px;background:#d08070;"></i><i style="left:350.0px;top:11px;width:16px;height:70px;background:#eef1f3;"></i><i style="left:351.0px;top:72px;width:14px;height:3px;background:#c8dcea;"></i><i style="left:227.0px;top:0px;width:98px;height:2px;background:#4a90d8;"></i><i style="left:366.0px;top:0px;width:156px;height:81px;background:#fdfdfd;"></i><i style="left:366.0px;top:11px;width:20px;height:70px;background:#f6f7f9;"></i><i style="left:366.0px;top:0px;width:1px;height:81px;background:#dde2e6;"></i><i style="left:390.0px;top:5px;width:50px;height:2px;background:repeating-linear-gradient(90deg,#c8c8cc 0 4px,transparent 4px 8px);"></i><i style="left:466.0px;top:4px;width:8px;height:5px;background:#ec6a58;"></i><i style="left:486.0px;top:5px;width:16px;height:2px;background:#c8c8cc;"></i><i style="left:512.0px;top:4px;width:7px;height:5px;background:#b0a0f0;"></i><i style="left:388.0px;top:14px;width:20px;height:2px;background:#c8c8cc;"></i><i style="left:390.0px;top:22px;width:10px;height:2px;background:#777;"></i><i style="left:392.0px;top:27px;width:18px;height:3px;background:#555;"></i><i style="left:412.0px;top:27px;width:20px;height:2px;background:#c0c0c4;"></i><i style="left:394.0px;top:33px;width:22px;height:2px;background:#c8c8cc;"></i><i style="left:390.0px;top:41px;width:8px;height:2px;background:#e8a8a0;"></i><i style="left:392.0px;top:46px;width:26px;height:2px;background:#a8a8ac;"></i><i style="left:420.0px;top:46px;width:40px;height:2px;background:#d0d0d4;"></i><i style="left:394.0px;top:52px;width:16px;height:2px;background:#e0a8a0;"></i><i style="left:392.0px;top:58px;width:30px;height:2px;background:#c8c8cc;"></i><i style="left:392.0px;top:64px;width:70px;height:2px;background:repeating-linear-gradient(90deg,#c8c8cc 0 12px,transparent 12px 16px);"></i><i style="left:394.0px;top:70px;width:22px;height:2px;background:#e0907a;"></i><i style="left:416.0px;top:74px;width:50px;height:2px;background:#d8d8dc;"></i><i style="left:470.0px;top:11px;width:36px;height:70px;background:#f9f8fc;"></i><i style="left:472.0px;top:15px;width:10px;height:2px;background:#a8a8ac;"></i><i style="left:473.0px;top:20px;width:27px;height:14px;background:linear-gradient(90deg,#c8b0e0 0,#b8a8e8 60%,#a898d8 100%);"></i><i style="left:473.0px;top:28px;width:12px;height:5px;background:#e87a6a;"></i><i style="left:474.0px;top:22px;width:9px;height:2px;background:#7a70a8;"></i><i style="left:488.0px;top:23px;width:8px;height:8px;background:#e0d0f8;border-radius:4px"></i><i style="left:472.0px;top:42px;width:14px;height:2px;background:#b0b0b4;"></i><i style="left:472.0px;top:48px;width:22px;height:2px;background:#c0c0c4;"></i><i style="left:500.0px;top:53px;width:5px;height:5px;background:#9a5ae0;border-radius:2px"></i><i style="left:474.0px;top:55px;width:8px;height:2px;background:#c0c0c4;"></i><i style="left:472.0px;top:61px;width:20px;height:3px;background:#e0a098;"></i><i style="left:472.0px;top:66px;width:24px;height:2px;background:#c8c8cc;"></i><i style="left:472.0px;top:72px;width:26px;height:2px;background:#d08070;"></i><i style="left:506.0px;top:11px;width:16px;height:70px;background:#eef1f3;"></i><i style="left:507.0px;top:72px;width:14px;height:3px;background:#c8dcea;"></i><i style="left:383.0px;top:0px;width:98px;height:2px;background:#4a90d8;"></i><i style="left:522.0px;top:0px;width:156px;height:81px;background:#fdfdfd;"></i><i style="left:522.0px;top:11px;width:20px;height:70px;background:#f6f7f9;"></i><i style="left:522.0px;top:0px;width:1px;height:81px;background:#dde2e6;"></i><i style="left:546.0px;top:5px;width:50px;height:2px;background:repeating-linear-gradient(90deg,#c8c8cc 0 4px,transparent 4px 8px);"></i><i style="left:622.0px;top:4px;width:8px;height:5px;background:#ec6a58;"></i><i style="left:642.0px;top:5px;width:16px;height:2px;background:#c8c8cc;"></i><i style="left:668.0px;top:4px;width:7px;height:5px;background:#b0a0f0;"></i><i style="left:544.0px;top:14px;width:20px;height:2px;background:#c8c8cc;"></i><i style="left:546.0px;top:22px;width:10px;height:2px;background:#777;"></i><i style="left:548.0px;top:27px;width:18px;height:3px;background:#555;"></i><i style="left:568.0px;top:27px;width:20px;height:2px;background:#c0c0c4;"></i><i style="left:550.0px;top:33px;width:22px;height:2px;background:#c8c8cc;"></i><i style="left:546.0px;top:41px;width:8px;height:2px;background:#e8a8a0;"></i><i style="left:548.0px;top:46px;width:26px;height:2px;background:#a8a8ac;"></i><i style="left:576.0px;top:46px;width:40px;height:2px;background:#d0d0d4;"></i><i style="left:550.0px;top:52px;width:16px;height:2px;background:#e0a8a0;"></i><i style="left:548.0px;top:58px;width:30px;height:2px;background:#c8c8cc;"></i><i style="left:548.0px;top:64px;width:70px;height:2px;background:repeating-linear-gradient(90deg,#c8c8cc 0 12px,transparent 12px 16px);"></i><i style="left:550.0px;top:70px;width:22px;height:2px;background:#e0907a;"></i><i style="left:572.0px;top:74px;width:50px;height:2px;background:#d8d8dc;"></i><i style="left:626.0px;top:11px;width:36px;height:70px;background:#f9f8fc;"></i><i style="left:628.0px;top:15px;width:10px;height:2px;background:#a8a8ac;"></i><i style="left:629.0px;top:20px;width:27px;height:14px;background:linear-gradient(90deg,#c8b0e0 0,#b8a8e8 60%,#a898d8 100%);"></i><i style="left:629.0px;top:28px;width:12px;height:5px;background:#e87a6a;"></i><i style="left:630.0px;top:22px;width:9px;height:2px;background:#7a70a8;"></i><i style="left:644.0px;top:23px;width:8px;height:8px;background:#e0d0f8;border-radius:4px"></i><i style="left:628.0px;top:42px;width:14px;height:2px;background:#b0b0b4;"></i><i style="left:628.0px;top:48px;width:22px;height:2px;background:#c0c0c4;"></i><i style="left:656.0px;top:53px;width:5px;height:5px;background:#9a5ae0;border-radius:2px"></i><i style="left:630.0px;top:55px;width:8px;height:2px;background:#c0c0c4;"></i><i style="left:628.0px;top:61px;width:20px;height:3px;background:#e0a098;"></i><i style="left:628.0px;top:66px;width:24px;height:2px;background:#c8c8cc;"></i><i style="left:628.0px;top:72px;width:26px;height:2px;background:#d08070;"></i><i style="left:662.0px;top:11px;width:16px;height:70px;background:#eef1f3;"></i><i style="left:663.0px;top:72px;width:14px;height:3px;background:#c8dcea;"></i><!--/C1--></div>
<div id="clip2" class="a" style="left:662px;top:651px;width:761px;height:81px;background:#efefef;overflow:hidden;filter:blur(1px)"><!--C2--><i style="left:0.0px;top:0px;width:156px;height:12px;background:#fbfbfb;"></i><i style="left:0.0px;top:12px;width:156px;height:54px;background:#efefef;"></i><i style="left:3.0px;top:3px;width:12px;height:2px;background:#c8c8cc;"></i><i style="left:32.0px;top:6px;width:8px;height:3px;background:#a8a8ac;"></i><i style="left:44.0px;top:7px;width:60px;height:1px;background:repeating-linear-gradient(90deg,#c0c0c4 0 6px,transparent 6px 9px);"></i><i style="left:117.0px;top:6px;width:10px;height:4px;background:#8ab8e8;"></i><i style="left:31.0px;top:12px;width:97px;height:49px;background:#fff;"></i><i style="left:38.0px;top:17px;width:22px;height:2px;background:#888;"></i><i style="left:38.0px;top:23px;width:46px;height:2px;background:#999;"></i><i style="left:38.0px;top:27px;width:32px;height:2px;background:#aaa;"></i><i style="left:38.0px;top:33px;width:20px;height:2px;background:#bbb;"></i><i style="left:38.0px;top:37px;width:84px;height:4px;background:#3a9ae8;"></i><i style="left:38.0px;top:43px;width:8px;height:2px;background:#999;"></i><i style="left:0.0px;top:61px;width:156px;height:5px;background:#f4f4f4;"></i><i style="left:0.0px;top:66px;width:156px;height:15px;background:#2c2c2e;"></i><i style="left:32.0px;top:73px;width:88px;height:2px;background:repeating-linear-gradient(90deg,#b8b8bc 0 10px,#6a6a6e 10px 13px);"></i><i style="left:36.0px;top:77px;width:50px;height:1px;background:#5a5a5e;"></i><i style="left:155.5px;top:0px;width:156px;height:12px;background:#fbfbfb;"></i><i style="left:155.5px;top:12px;width:156px;height:54px;background:#efefef;"></i><i style="left:158.5px;top:3px;width:12px;height:2px;background:#c8c8cc;"></i><i style="left:187.5px;top:6px;width:8px;height:3px;background:#a8a8ac;"></i><i style="left:199.5px;top:7px;width:60px;height:1px;background:repeating-linear-gradient(90deg,#c0c0c4 0 6px,transparent 6px 9px);"></i><i style="left:272.5px;top:6px;width:10px;height:4px;background:#8ab8e8;"></i><i style="left:186.5px;top:12px;width:97px;height:49px;background:#fff;"></i><i style="left:193.5px;top:17px;width:22px;height:2px;background:#888;"></i><i style="left:193.5px;top:23px;width:46px;height:2px;background:#999;"></i><i style="left:193.5px;top:27px;width:32px;height:2px;background:#aaa;"></i><i style="left:193.5px;top:33px;width:20px;height:2px;background:#bbb;"></i><i style="left:193.5px;top:37px;width:84px;height:4px;background:#3a9ae8;"></i><i style="left:193.5px;top:43px;width:8px;height:2px;background:#999;"></i><i style="left:155.5px;top:61px;width:156px;height:5px;background:#f4f4f4;"></i><i style="left:155.5px;top:66px;width:156px;height:15px;background:#2c2c2e;"></i><i style="left:187.5px;top:73px;width:88px;height:2px;background:repeating-linear-gradient(90deg,#b8b8bc 0 10px,#6a6a6e 10px 13px);"></i><i style="left:191.5px;top:77px;width:50px;height:1px;background:#5a5a5e;"></i><i style="left:311.0px;top:0px;width:156px;height:12px;background:#fbfbfb;"></i><i style="left:311.0px;top:12px;width:156px;height:54px;background:#efefef;"></i><i style="left:314.0px;top:3px;width:12px;height:2px;background:#c8c8cc;"></i><i style="left:343.0px;top:6px;width:8px;height:3px;background:#a8a8ac;"></i><i style="left:355.0px;top:7px;width:60px;height:1px;background:repeating-linear-gradient(90deg,#c0c0c4 0 6px,transparent 6px 9px);"></i><i style="left:428.0px;top:6px;width:10px;height:4px;background:#8ab8e8;"></i><i style="left:342.0px;top:12px;width:97px;height:49px;background:#fff;"></i><i style="left:349.0px;top:17px;width:22px;height:2px;background:#888;"></i><i style="left:349.0px;top:23px;width:46px;height:2px;background:#999;"></i><i style="left:349.0px;top:27px;width:32px;height:2px;background:#aaa;"></i><i style="left:349.0px;top:33px;width:20px;height:2px;background:#bbb;"></i><i style="left:349.0px;top:37px;width:84px;height:4px;background:#3a9ae8;"></i><i style="left:349.0px;top:43px;width:8px;height:2px;background:#999;"></i><i style="left:311.0px;top:61px;width:156px;height:5px;background:#f4f4f4;"></i><i style="left:311.0px;top:66px;width:156px;height:15px;background:#2c2c2e;"></i><i style="left:343.0px;top:73px;width:88px;height:2px;background:repeating-linear-gradient(90deg,#b8b8bc 0 10px,#6a6a6e 10px 13px);"></i><i style="left:347.0px;top:77px;width:50px;height:1px;background:#5a5a5e;"></i><i style="left:456.0px;top:71px;width:15px;height:3px;background:#c8ccd4;"></i><i style="left:466.5px;top:0px;width:156px;height:12px;background:#fbfbfb;"></i><i style="left:466.5px;top:12px;width:156px;height:54px;background:#efefef;"></i><i style="left:469.5px;top:3px;width:12px;height:2px;background:#c8c8cc;"></i><i style="left:498.5px;top:6px;width:8px;height:3px;background:#a8a8ac;"></i><i style="left:510.5px;top:7px;width:60px;height:1px;background:repeating-linear-gradient(90deg,#c0c0c4 0 6px,transparent 6px 9px);"></i><i style="left:583.5px;top:6px;width:10px;height:4px;background:#8ab8e8;"></i><i style="left:497.5px;top:12px;width:97px;height:49px;background:#fff;"></i><i style="left:504.5px;top:17px;width:22px;height:2px;background:#888;"></i><i style="left:504.5px;top:23px;width:46px;height:2px;background:#999;"></i><i style="left:504.5px;top:27px;width:32px;height:2px;background:#aaa;"></i><i style="left:504.5px;top:33px;width:20px;height:2px;background:#bbb;"></i><i style="left:504.5px;top:37px;width:84px;height:4px;background:#3a9ae8;"></i><i style="left:504.5px;top:43px;width:8px;height:2px;background:#999;"></i><i style="left:466.5px;top:61px;width:156px;height:5px;background:#f4f4f4;"></i><i style="left:466.5px;top:66px;width:156px;height:15px;background:#2c2c2e;"></i><i style="left:498.5px;top:73px;width:88px;height:2px;background:repeating-linear-gradient(90deg,#b8b8bc 0 10px,#6a6a6e 10px 13px);"></i><i style="left:502.5px;top:77px;width:50px;height:1px;background:#5a5a5e;"></i><i style="left:611.5px;top:71px;width:15px;height:3px;background:#c8ccd4;"></i><i style="left:622.0px;top:0px;width:156px;height:12px;background:#fbfbfb;"></i><i style="left:622.0px;top:12px;width:156px;height:54px;background:#efefef;"></i><i style="left:625.0px;top:3px;width:12px;height:2px;background:#c8c8cc;"></i><i style="left:654.0px;top:6px;width:8px;height:3px;background:#a8a8ac;"></i><i style="left:666.0px;top:7px;width:60px;height:1px;background:repeating-linear-gradient(90deg,#c0c0c4 0 6px,transparent 6px 9px);"></i><i style="left:739.0px;top:6px;width:10px;height:4px;background:#8ab8e8;"></i><i style="left:653.0px;top:12px;width:97px;height:49px;background:#fff;"></i><i style="left:660.0px;top:17px;width:22px;height:2px;background:#888;"></i><i style="left:660.0px;top:23px;width:46px;height:2px;background:#999;"></i><i style="left:660.0px;top:27px;width:32px;height:2px;background:#aaa;"></i><i style="left:660.0px;top:33px;width:20px;height:2px;background:#bbb;"></i><i style="left:660.0px;top:37px;width:84px;height:4px;background:#3a9ae8;"></i><i style="left:660.0px;top:43px;width:8px;height:2px;background:#999;"></i><i style="left:622.0px;top:61px;width:156px;height:5px;background:#f4f4f4;"></i><i style="left:622.0px;top:66px;width:156px;height:15px;background:#2c2c2e;"></i><i style="left:654.0px;top:73px;width:88px;height:2px;background:repeating-linear-gradient(90deg,#b8b8bc 0 10px,#6a6a6e 10px 13px);"></i><i style="left:658.0px;top:77px;width:50px;height:1px;background:#5a5a5e;"></i><i style="left:767.0px;top:71px;width:15px;height:3px;background:#c8ccd4;"></i><i style="left:777.5px;top:0px;width:156px;height:12px;background:#fbfbfb;"></i><i style="left:777.5px;top:12px;width:156px;height:54px;background:#efefef;"></i><i style="left:780.5px;top:3px;width:12px;height:2px;background:#c8c8cc;"></i><i style="left:809.5px;top:6px;width:8px;height:3px;background:#a8a8ac;"></i><i style="left:821.5px;top:7px;width:60px;height:1px;background:repeating-linear-gradient(90deg,#c0c0c4 0 6px,transparent 6px 9px);"></i><i style="left:894.5px;top:6px;width:10px;height:4px;background:#8ab8e8;"></i><i style="left:808.5px;top:12px;width:97px;height:49px;background:#fff;"></i><i style="left:815.5px;top:17px;width:22px;height:2px;background:#888;"></i><i style="left:815.5px;top:23px;width:46px;height:2px;background:#999;"></i><i style="left:815.5px;top:27px;width:32px;height:2px;background:#aaa;"></i><i style="left:815.5px;top:33px;width:20px;height:2px;background:#bbb;"></i><i style="left:815.5px;top:37px;width:84px;height:4px;background:#3a9ae8;"></i><i style="left:815.5px;top:43px;width:8px;height:2px;background:#999;"></i><i style="left:777.5px;top:61px;width:156px;height:5px;background:#f4f4f4;"></i><i style="left:777.5px;top:66px;width:156px;height:15px;background:#2c2c2e;"></i><i style="left:809.5px;top:73px;width:88px;height:2px;background:repeating-linear-gradient(90deg,#b8b8bc 0 10px,#6a6a6e 10px 13px);"></i><i style="left:813.5px;top:77px;width:50px;height:1px;background:#5a5a5e;"></i><i style="left:922.5px;top:71px;width:15px;height:3px;background:#c8ccd4;"></i><!--/C2--></div>
<div class="a" style="left:138px;top:732px;width:1285px;height:18px;background:#4a7aa8"></div>
<div class="a" style="left:138px;top:750px;width:1285px;height:2px;background:#a8c4dc"></div>
<div class="a" style="left:1419px;top:560px;width:4px;height:85px;background:#1e1e22"></div>
<div class="a" style="left:1419px;top:752px;width:4px;height:28px;background:#1e1e22"></div>
<div class="a" style="left:1415px;top:651px;width:8px;height:100px;background:linear-gradient(90deg,rgba(190,190,196,0) 0,rgba(190,190,196,0.45) 60%,rgba(190,190,196,0.35) 100%)"></div>
<!-- trim cursor -->
<svg style="left:766px;top:679px" width="28" height="26"><path d="M8 1H4Q2 1 2 3v20q0 2 2 2h4v-3H5V4h3z" fill="#d8dcd8" stroke="#3a3a3a" stroke-width="1.2"/><path d="M20 1h4q2 0 2 2v20q0 2-2 2h-4v-3h3V4h-3z" fill="#d8dcd8" stroke="#3a3a3a" stroke-width="1.2"/><path d="M7 13l5-4v8z" fill="#eee" stroke="#333" stroke-width="1.2"/><path d="M21 13l-5-4v8z" fill="#eee" stroke="#333" stroke-width="1.2"/></svg>
<!-- lower playhead -->
<div class="a" style="left:778px;top:572px;width:5px;height:208px;background:#b8544a"></div>
<div class="a" style="left:779px;top:572px;width:3px;height:208px;background:#d08276"></div>
<svg style="left:772px;top:560px" width="18" height="15"><path d="M0 0h18v7l-9 8-9-8z" fill="#ec4a3a"/></svg>

<!-- bottom bar -->
<div class="a" style="left:0;top:780px;width:1423px;height:34px;background:#1b1b1d"></div>
<svg style="left:26px;top:787px" width="22" height="20"><path d="M11 0.5c2.5 0 4 2 4 4.5 0 2.5-2.5 5-4 6.5-1.5-1.5-4-4-4-6.5 0-2.5 1.5-4.5 4-4.5z" fill="#e8e8e8"/><circle cx="5" cy="15" r="4.5" fill="#e8e8e8"/><circle cx="17" cy="15" r="4.5" fill="#e8e8e8"/></svg>
<div class="t" style="left:55px;top:792px;font-size:13.8px;color:#d0d0d2">DaVinci Resolve 18</div>
<div class="a" style="left:186px;top:789px;width:91px;height:18px;background:#bf4536;border-radius:2px"></div>
<div class="t" style="left:187px;top:794px;width:91px;text-align:center;font-size:8.5px;font-weight:bold;letter-spacing:1px;color:#f2c4b8">PUBLIC BETA</div>
<svg style="left:333px;top:790px" width="19" height="15"><rect x="1" y="1" width="17" height="13" fill="none" stroke="#6a6a6e" stroke-width="1.4"/><path d="M4 5h5M4 9h8" stroke="#6a6a6e" stroke-width="1.2"/></svg>
<div class="a" style="left:407px;top:780px;width:125px;height:34px;background:#080808"></div>
<div class="a" style="left:407px;top:811px;width:125px;height:3px;background:#d04a3a"></div>
<svg style="left:455px;top:789px" width="28" height="16"><path d="M5 1h20l-4 14H1z" fill="none" stroke="#3a7ad8" stroke-width="1.6"/><path d="M12 1l-4 14M17 1l-4 14" stroke="#3a7ad8" stroke-width="1.6"/></svg>
<svg style="left:585px;top:788px" width="22" height="18"><path d="M11 0v18" stroke="#8a8a8e" stroke-width="2"/><path d="M1 3h7M1 7h7M1 11h7M1 15h7M14 3h7M14 7h7M14 11h7M14 15h7" stroke="#7a7a7e" stroke-width="1.5"/></svg>
<svg style="left:714px;top:788px" width="22" height="20"><path d="M8 19L19 5" stroke="#7a7a7e" stroke-width="3"/><path d="M5 1v3M2 5h3M9 3l1-2M3 10l2-1M10 7h2" stroke="#5a5a5e" stroke-width="1.3"/></svg>
<svg style="left:840px;top:787px" width="20" height="20"><g fill="#6a6a6e"><circle cx="10" cy="2" r="1.5"/><circle cx="16" cy="5" r="1.5"/><circle cx="18" cy="11" r="1.5"/><circle cx="15" cy="17" r="1.5"/><circle cx="9" cy="18" r="1.5"/><circle cx="3" cy="15" r="1.5"/><circle cx="2" cy="8" r="1.5"/><circle cx="5" cy="3" r="1.5"/></g></svg>
<svg style="left:970px;top:789px" width="16" height="17"><path d="M5 14V3l10-2v11" fill="none" stroke="#8a8a8e" stroke-width="1.8"/><circle cx="3.5" cy="14" r="2.5" fill="#8a8a8e"/><circle cx="13" cy="12" r="2.5" fill="#8a8a8e"/></svg>
<svg style="left:1094px;top:787px" width="20" height="20"><path d="M19 1c-6 0-11 4-13 10l3 3c6-2 10-7 10-13z" fill="none" stroke="#5a5a5e" stroke-width="1.6"/><path d="M6 11l-4 1 3-4M9 14l-1 4 4-3M5 15l-3 3" stroke="#5a5a5e" stroke-width="1.4" fill="none"/></svg>
<svg style="left:1326px;top:789px" width="18" height="16"><path d="M9 0L0 8h3v8h4v-5h4v5h4V8h3z" fill="#c8c8cc"/></svg>
<svg style="left:1378px;top:788px" width="18" height="18"><circle cx="9" cy="9" r="5" fill="none" stroke="#c8c8cc" stroke-width="3.5"/><path d="M9 0v4M9 14v4M0 9h4M14 9h4M2.6 2.6l2.8 2.8M12.6 12.6l2.8 2.8M2.6 15.4l2.8-2.8M12.6 5.4l2.8-2.8" stroke="#c8c8cc" stroke-width="3"/><circle cx="9" cy="9" r="2" fill="#1b1b1d"/></svg>
</body></html>
